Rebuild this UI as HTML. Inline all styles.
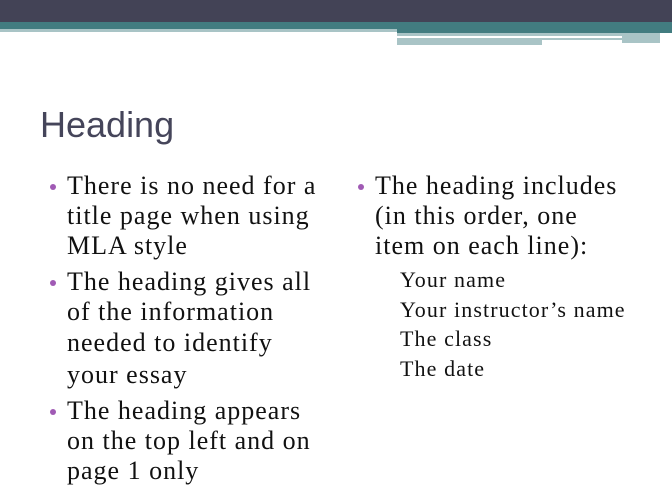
<!DOCTYPE html>
<html><head><meta charset="utf-8"><style>
body{margin:0;width:672px;height:504px;background:#fff;position:relative;overflow:hidden}
div{position:absolute}
.t{font-family:"Liberation Serif",serif;font-size:26px;color:#111;white-space:nowrap;line-height:30px;letter-spacing:1px}
.s{font-family:"Liberation Serif",serif;font-size:22px;color:#111;white-space:nowrap;line-height:30px;letter-spacing:1.1px}
.b{width:6px;height:6px;border-radius:50%;background:#a05ab4}
</style></head><body>
<div style="left:0;top:0;width:672px;height:22px;background:#434356"></div>
<div style="left:0;top:22px;width:672px;height:7px;background:#427c80"></div>
<div style="left:0;top:29px;width:397px;height:3px;background:#a9c4c6"></div>
<div style="left:397px;top:29px;width:275px;height:4px;background:#427c80"></div>
<div style="left:397px;top:33px;width:225px;height:4px;background:#a9c4c6"></div>
<div style="left:397px;top:36px;width:225px;height:2px;background:#fff"></div>
<div style="left:397px;top:38px;width:225px;height:2px;background:#a9c4c6"></div>
<div style="left:622px;top:33px;width:38px;height:10px;background:#a9c4c6"></div>
<div style="left:397px;top:40px;width:145px;height:5px;background:#a9c4c6"></div>
<div style="left:40px;top:104px;font-family:'Liberation Sans',sans-serif;font-size:36px;color:#45455a">Heading</div>
<div class="b" style="left:50px;top:184px"></div>
<div class="t" style="left:67px;top:171px">There is no need for a</div>
<div class="t" style="left:67px;top:201px">title page when using</div>
<div class="t" style="left:67px;top:231px">MLA style</div>
<div class="b" style="left:50px;top:280px"></div>
<div class="t" style="left:67px;top:267px">The heading gives all</div>
<div class="t" style="left:67px;top:297px">of the information</div>
<div class="t" style="left:67px;top:328px">needed to identify</div>
<div class="t" style="left:67px;top:360px">your essay</div>
<div class="b" style="left:50px;top:409px"></div>
<div class="t" style="left:67px;top:396px">The heading appears</div>
<div class="t" style="left:67px;top:426px">on the top left and on</div>
<div class="t" style="left:67px;top:456px">page 1 only</div>
<div class="b" style="left:358px;top:184px"></div>
<div class="t" style="left:375px;top:171px">The heading includes</div>
<div class="t" style="left:375px;top:201px">(in this order, one</div>
<div class="t" style="left:375px;top:231px">item on each line):</div>
<div class="s" style="left:400px;top:265px">Your name</div>
<div class="s" style="left:400px;top:295px">Your instructor’s name</div>
<div class="s" style="left:400px;top:324px">The class</div>
<div class="s" style="left:400px;top:354px">The date</div>
</body></html>
